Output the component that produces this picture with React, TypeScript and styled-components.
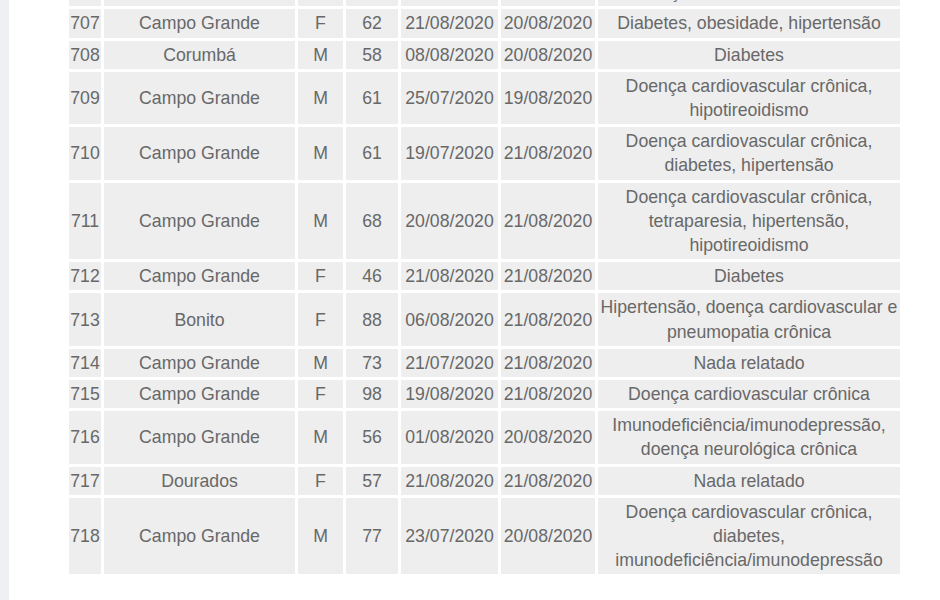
import React from "react";
import styled, { createGlobalStyle } from "styled-components";

const GlobalStyle = createGlobalStyle`
  html, body {
    margin: 0;
    padding: 0;
    background: #ffffff;
    overflow: hidden;
  }
`;

const Page = styled.div`
  display: flex;
  width: 940px;
  height: 600px;
  overflow: hidden;
`;

const SideStrip = styled.aside`
  flex: 0 0 9px;
  background: #eef0f3;
`;

const Content = styled.main`
  flex: 1;
  padding-left: 57px;
`;

const Table = styled.table`
  margin-top: -49px;
  border-collapse: separate;
  border-spacing: 3px;
  table-layout: fixed;
  width: 837px;
  font-family: "Liberation Sans", Arial, sans-serif;
  font-size: 17.7px;
  line-height: 24.2px;
  color: #686868;
`;

const Cell = styled.td<{ $tight?: boolean }>`
  background: #eeeeee;
  padding: ${(p) => (p.$tight ? "2px 0" : "2px 1px")};
  text-align: center;
  vertical-align: middle;
  white-space: nowrap;
`;

// one case per row: id, city, sex, age, first symptoms, death date, comorbidities
type Case = {
  id: number;
  city: string;
  sex: string;
  age: number;
  onset: string;
  death: string;
  notes: string[];
};

const cases: Case[] = [
  { id: 706, city: "Campo Grande", sex: "M", age: 70, onset: "15/08/2020", death: "20/08/2020", notes: ["Hipertensão, diabetes,", "Doença cardiovascular crônica"] },
  { id: 707, city: "Campo Grande", sex: "F", age: 62, onset: "21/08/2020", death: "20/08/2020", notes: ["Diabetes, obesidade, hipertensão"] },
  { id: 708, city: "Corumbá", sex: "M", age: 58, onset: "08/08/2020", death: "20/08/2020", notes: ["Diabetes"] },
  { id: 709, city: "Campo Grande", sex: "M", age: 61, onset: "25/07/2020", death: "19/08/2020", notes: ["Doença cardiovascular crônica,", "hipotireoidismo"] },
  { id: 710, city: "Campo Grande", sex: "M", age: 61, onset: "19/07/2020", death: "21/08/2020", notes: ["Doença cardiovascular crônica,", "diabetes, hipertensão"] },
  { id: 711, city: "Campo Grande", sex: "M", age: 68, onset: "20/08/2020", death: "21/08/2020", notes: ["Doença cardiovascular crônica,", "tetraparesia, hipertensão,", "hipotireoidismo"] },
  { id: 712, city: "Campo Grande", sex: "F", age: 46, onset: "21/08/2020", death: "21/08/2020", notes: ["Diabetes"] },
  { id: 713, city: "Bonito", sex: "F", age: 88, onset: "06/08/2020", death: "21/08/2020", notes: ["Hipertensão, doença cardiovascular e", "pneumopatia crônica"] },
  { id: 714, city: "Campo Grande", sex: "M", age: 73, onset: "21/07/2020", death: "21/08/2020", notes: ["Nada relatado"] },
  { id: 715, city: "Campo Grande", sex: "F", age: 98, onset: "19/08/2020", death: "21/08/2020", notes: ["Doença cardiovascular crônica"] },
  { id: 716, city: "Campo Grande", sex: "M", age: 56, onset: "01/08/2020", death: "20/08/2020", notes: ["Imunodeficiência/imunodepressão,", "doença neurológica crônica"] },
  { id: 717, city: "Dourados", sex: "F", age: 57, onset: "21/08/2020", death: "21/08/2020", notes: ["Nada relatado"] },
  { id: 718, city: "Campo Grande", sex: "M", age: 77, onset: "23/07/2020", death: "20/08/2020", notes: ["Doença cardiovascular crônica,", "diabetes,", "imunodeficiência/imunodepressão"] },
];

const widths = [32, 191, 45, 52, 97, 94, 302];

export default function App() {
  return (
    <>
      <GlobalStyle />
      <Page>
        <SideStrip />
        <Content>
          <Table>
            <colgroup>
              {widths.map((w, i) => (
                <col key={i} style={{ width: w }} />
              ))}
            </colgroup>
            <tbody>
              {cases.map((c) => (
                <tr key={c.id}>
                  <Cell>{c.id}</Cell>
                  <Cell>{c.city}</Cell>
                  <Cell>{c.sex}</Cell>
                  <Cell>{c.age}</Cell>
                  <Cell>{c.onset}</Cell>
                  <Cell>{c.death}</Cell>
                  <Cell $tight>
                    {c.notes.map((line, i) => (
                      <React.Fragment key={i}>
                        {i > 0 && <br />}
                        {line}
                      </React.Fragment>
                    ))}
                  </Cell>
                </tr>
              ))}
            </tbody>
          </Table>
        </Content>
      </Page>
    </>
  );
}
